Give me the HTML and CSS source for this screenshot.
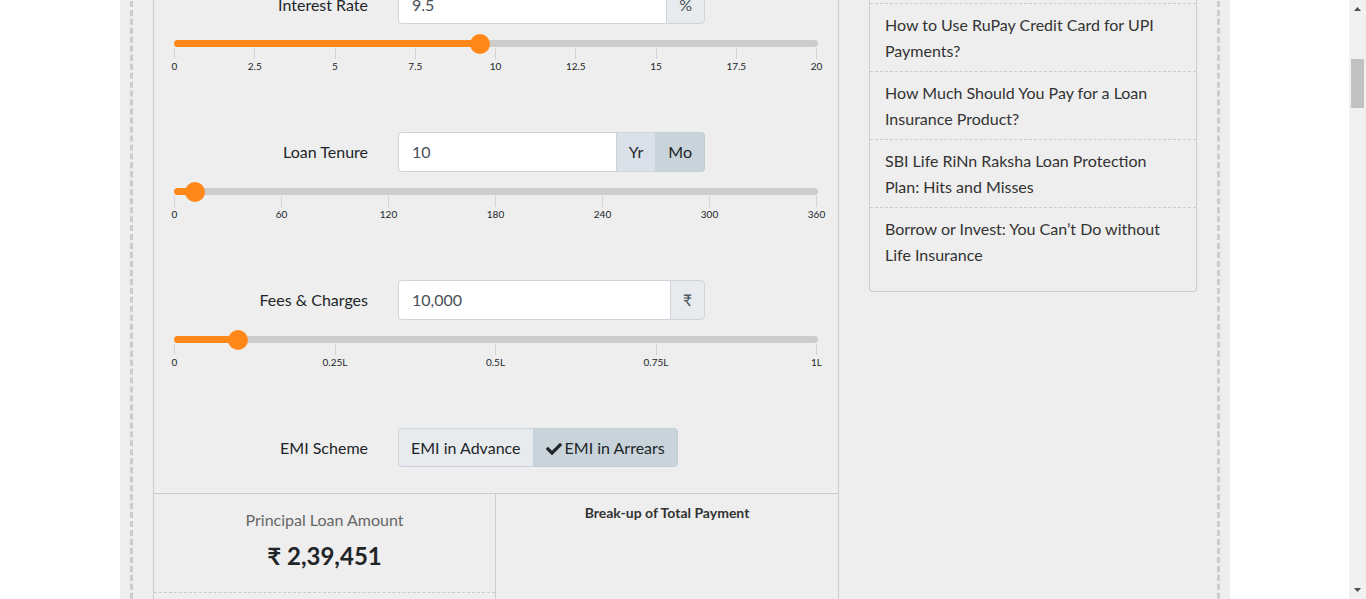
FILE: index.html
```html
<!DOCTYPE html>
<html lang="en">
<head>
<meta charset="utf-8">
<title>Loan EMI Calculator</title>
<link rel="stylesheet" href="styles.css">
</head>
<body>
<div class="window">
  <main class="viewport">
    <div class="page">
      <div class="frame">
        <section class="calculator">
          <form class="loan-form">
            <div class="control">
              <div class="row">
                <label class="row-label" for="rate">Interest Rate</label>
                <div class="group group-compact">
                  <input class="text-input" id="rate" type="text" value="9.5">
                  <span class="addon">%</span>
                </div>
              </div>
              <div class="slider" style="--value: 47.5%">
                <input class="range" type="range" min="0" max="20" step="0.25" value="9.5" aria-label="Interest rate slider">
              </div>
              <div class="ticks"><span class="tick"><span>0</span></span><span class="tick"><span>2.5</span></span><span class="tick"><span>5</span></span><span class="tick"><span>7.5</span></span><span class="tick"><span>10</span></span><span class="tick"><span>12.5</span></span><span class="tick"><span>15</span></span><span class="tick"><span>17.5</span></span><span class="tick"><span>20</span></span></div>
            </div>

            <div class="control">
              <div class="row">
                <label class="row-label" for="tenure">Loan Tenure</label>
                <div class="group">
                  <input class="text-input" id="tenure" type="text" value="10">
                  <button class="unit" type="button" aria-pressed="false">Yr</button>
                  <button class="unit unit-active" type="button" aria-pressed="true">Mo</button>
                </div>
              </div>
              <div class="slider" style="--value: 3.33%">
                <input class="range" type="range" min="0" max="360" value="12" aria-label="Loan tenure slider">
              </div>
              <div class="ticks"><span class="tick"><span>0</span></span><span class="tick"><span>60</span></span><span class="tick"><span>120</span></span><span class="tick"><span>180</span></span><span class="tick"><span>240</span></span><span class="tick"><span>300</span></span><span class="tick"><span>360</span></span></div>
            </div>

            <div class="control">
              <div class="row">
                <label class="row-label" for="fees">Fees &amp; Charges</label>
                <div class="group">
                  <input class="text-input" id="fees" type="text" value="10,000">
                  <span class="addon">₹</span>
                </div>
              </div>
              <div class="slider" style="--value: 10%">
                <input class="range" type="range" min="0" max="100000" step="1000" value="10000" aria-label="Fees and charges slider">
              </div>
              <div class="ticks"><span class="tick"><span>0</span></span><span class="tick"><span>0.25L</span></span><span class="tick"><span>0.5L</span></span><span class="tick"><span>0.75L</span></span><span class="tick"><span>1L</span></span></div>
            </div>

            <div class="row scheme">
              <span class="row-label" id="scheme-label">EMI Scheme</span>
              <div class="options" role="group" aria-labelledby="scheme-label">
                <button class="option" type="button" aria-pressed="false">EMI in Advance</button>
                <button class="option option-active" type="button" aria-pressed="true"><svg class="check" viewBox="0 0 512 512" aria-hidden="true"><path d="M173.9 439.4L7.5 273c-10-10-10-26.200 0-36.200l36.200-36.200c10-10 26.200-10 36.200 0L192 312.700 432.100 72.600c10-10 26.200-10 36.200 0l36.200 36.200c10 10 10 26.200 0 36.200L210.100 439.400c-10 10-26.200 10-36.200 0z"/></svg>EMI in Arrears</button>
              </div>
            </div>
          </form>

          <div class="summary">
            <div class="totals">
              <div class="total">
                <h4 class="total-label">Principal Loan Amount</h4>
                <p class="total-value">₹ 2,39,451</p>
              </div>
            </div>
            <div class="breakup">
              <h4 class="breakup-title">Break-up of Total Payment</h4>
            </div>
          </div>
        </section>

        <aside class="sidebar">
          <ul class="articles">
            <li><a href="#">How to Use RuPay Credit Card for UPI Payments?</a></li>
            <li><a href="#">How Much Should You Pay for a Loan Insurance Product?</a></li>
            <li><a href="#">SBI Life RiNn Raksha Loan Protection Plan: Hits and Misses</a></li>
            <li><a href="#">Borrow or Invest: You Can’t Do without Life Insurance</a></li>
          </ul>
        </aside>
      </div>
    </div>
  </main>
  <div class="scrollbar" aria-hidden="true">
    <svg class="arrow" viewBox="0 0 17 17"><path d="M5 11h7L8.500 7z"/></svg>
    <div class="scroll-track"><div class="scroll-thumb"></div></div>
    <svg class="arrow" viewBox="0 0 17 17"><path d="M5 6h7L8.500 10z"/></svg>
  </div>
</div>
</body>
</html>
```
FILE: styles.css
```css
*,
*::before,
*::after {
  box-sizing: border-box;
}

body {
  margin: 0;
  background: #fff;
  color: #212529;
  font-family: Lato, "Liberation Sans", sans-serif;
  font-size: 16px;
  line-height: 24px;
}

button,
input {
  font: inherit;
}

.window {
  display: flex;
  height: 100vh;
}

.viewport {
  flex: 1;
  min-width: 0;
  padding-left: 1px;
  overflow: hidden;
}

/* The page is scrolled part of the way down. */
.page {
  max-width: 1110px;
  margin: -17px auto 0;
  padding: 0 10px;
  background: #eee;
}

.frame {
  display: grid;
  grid-template-columns: 686fr 328fr;
  gap: 30px;
  align-items: start;
  padding: 3px 20px 0;
  border: 3px dashed #ccc;
  border-width: 0 3px;
}

.calculator {
  border: 1px solid #ccc;
  border-top: 0;
}

.loan-form {
  padding: 0 20px 26px;
}

.control {
  padding-bottom: 59px;
}

.row {
  display: grid;
  grid-template-columns: 194fr 307fr 83fr;
  gap: 30px;
  align-items: center;
}

.row-label {
  text-align: right;
}

.group {
  display: flex;
  min-width: 0;
  height: 40px;
}

.group-compact {
  height: 38px;
}

.text-input {
  flex: 1;
  min-width: 0;
  padding: 6px 13px;
  border: 1px solid #ced4da;
  border-right: 0;
  border-radius: 4px 0 0 4px;
  background: #fff;
  color: #495057;
}

.addon {
  display: flex;
  align-items: center;
  padding: 0 12px;
  border: 1px solid #ced4da;
  border-radius: 0 4px 4px 0;
  background: #e7ebee;
  color: #495057;
}

.unit {
  padding: 0 12px;
  border: 1px solid #ced4da;
  border-right: 0;
  background: #dae0e8;
  color: #212529;
}

.unit-active {
  border: 1px solid #c1ced6;
  border-left-color: #c8d3da;
  border-radius: 0 4px 4px 0;
  background: #c8d3da;
}

.slider {
  display: flex;
  align-items: center;
  height: 7px;
  margin-top: 16px;
  border-radius: 4px;
  background: linear-gradient(to right, #ff8819 var(--value), #ccc var(--value));
}

/* Half a thumb hangs over each end, so its centre meets the track ends. */
.range {
  flex: 1;
  height: 20px;
  margin: 0 -10px;
  appearance: none;
  background: transparent;
}

.range::-webkit-slider-thumb {
  appearance: none;
  width: 20px;
  height: 20px;
  border-radius: 50%;
  background: #ff8819;
}

.ticks {
  display: flex;
  justify-content: space-between;
  margin-right: 1px;
  padding-top: 1px;
  font-size: 10px;
  line-height: 14px;
}

.tick {
  display: flex;
  flex-direction: column;
  align-items: center;
  width: 1px;
}

.tick::before {
  content: "";
  width: 1px;
  height: 11px;
  flex: none;
  background: #d3d3d3;
}

.options {
  display: flex;
  height: 39px;
}

.option {
  padding: 0 12px;
  border: 1px solid #ced4da;
  border-right: 0;
  border-radius: 4px 0 0 4px;
  background: #e7ebee;
  color: #212529;
  white-space: nowrap;
}

.option-active {
  border: 1px solid #c1ced6;
  border-radius: 0 4px 4px 0;
  background: #c8d3da;
}

.check {
  width: 16px;
  height: 16px;
  margin-right: 3px;
  vertical-align: -3px;
  fill: #212529;
}

.summary {
  display: grid;
  grid-template-columns: 1fr 1fr;
  min-height: 320px;
  border-top: 1px solid #ccc;
  text-align: center;
}

.totals {
  border-right: 1px solid #ccc;
}

.total {
  padding: 14px 0 20px;
  border-bottom: 1px dashed #ccc;
}

.total-label {
  margin: 0;
  color: #666;
  font-size: 16px;
  font-weight: 400;
}

.total-value {
  margin: 8px 0 0;
  font-size: 24px;
  font-weight: 700;
  line-height: 32px;
}

.breakup-title {
  margin: 0;
  padding-top: 7px;
  color: #333;
  font-size: 14px;
  font-weight: 700;
}

.sidebar {
  padding: 17px 0 16px;
  border: 1px solid #ccc;
  border-top: 0;
  border-radius: 0 0 4px 4px;
}

.articles {
  margin: 0;
  padding: 0;
  list-style: none;
  line-height: 26px;
}

.articles li {
  padding: 8px 15px 7px;
  border-top: 1px dashed #ccc;
}

.articles a {
  color: #333;
  text-decoration: none;
}

.scrollbar {
  display: flex;
  flex: none;
  flex-direction: column;
  width: 17px;
  background: #f1f1f1;
}

.arrow {
  width: 17px;
  height: 17px;
  fill: #505050;
}

.scroll-track {
  flex: 1;
  padding: 42px 2px 0;
}

.scroll-thumb {
  height: 49px;
  background: #c1c1c1;
}
```
